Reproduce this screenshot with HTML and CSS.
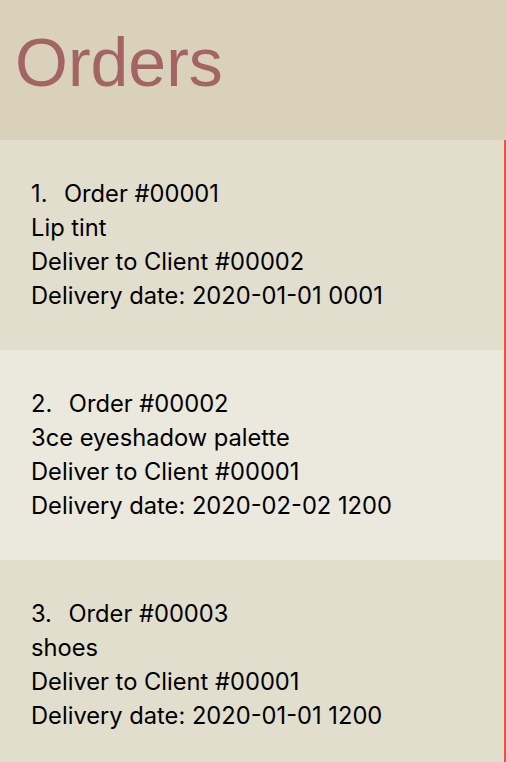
FILE: index.html
```html
<!DOCTYPE html>
<html lang="en">
<head>
<meta charset="utf-8">
<title>Orders</title>
<link rel="stylesheet" href="styles.css">
</head>
<body>
<header class="page-header">
  <h1 class="page-title">Orders</h1>
</header>
<ol class="order-list">
  <li class="order">
    <div class="order-line order-title">Order #00001</div>
    <div class="order-line">Lip tint</div>
    <div class="order-line">Deliver to Client #00002</div>
    <div class="order-line">Delivery date: 2020-01-01 0001</div>
  </li>
  <li class="order">
    <div class="order-line order-title">Order #00002</div>
    <div class="order-line">3ce eyeshadow palette</div>
    <div class="order-line">Deliver to Client #00001</div>
    <div class="order-line">Delivery date: 2020-02-02 1200</div>
  </li>
  <li class="order">
    <div class="order-line order-title">Order #00003</div>
    <div class="order-line">shoes</div>
    <div class="order-line">Deliver to Client #00001</div>
    <div class="order-line">Delivery date: 2020-01-01 1200</div>
  </li>
</ol>
</body>
</html>
```
FILE: styles.css
```css
html, body {
  margin: 0;
  padding: 0;
  background: #e2dece;
}

.page-header {
  height: 140px;
  box-sizing: border-box;
  background: #d9d1b9;
  padding: 28px 0 0 15px;
}

.page-title {
  margin: 0;
  font-family: "Liberation Sans", Arial, sans-serif;
  font-weight: 400;
  font-size: 68px;
  line-height: 68px;
  color: #a36464;
}

.order-list {
  list-style: none;
  margin: 0;
  padding: 0;
  counter-reset: order;
  border-right: 2px solid #e9553b;
  font-family: Inter, "Noto Sans", sans-serif;
  font-size: 23.7px;
  line-height: 34px;
  color: #000;
}

.order {
  counter-increment: order;
  padding: 37px 31px 37px 31px;
  background: #e2dece;
}

.order:nth-child(even) {
  background: #ebe8dd;
}

.order-title::before {
  content: counter(order) ".";
  display: inline-block;
  margin-right: 16.5px;
}
```
